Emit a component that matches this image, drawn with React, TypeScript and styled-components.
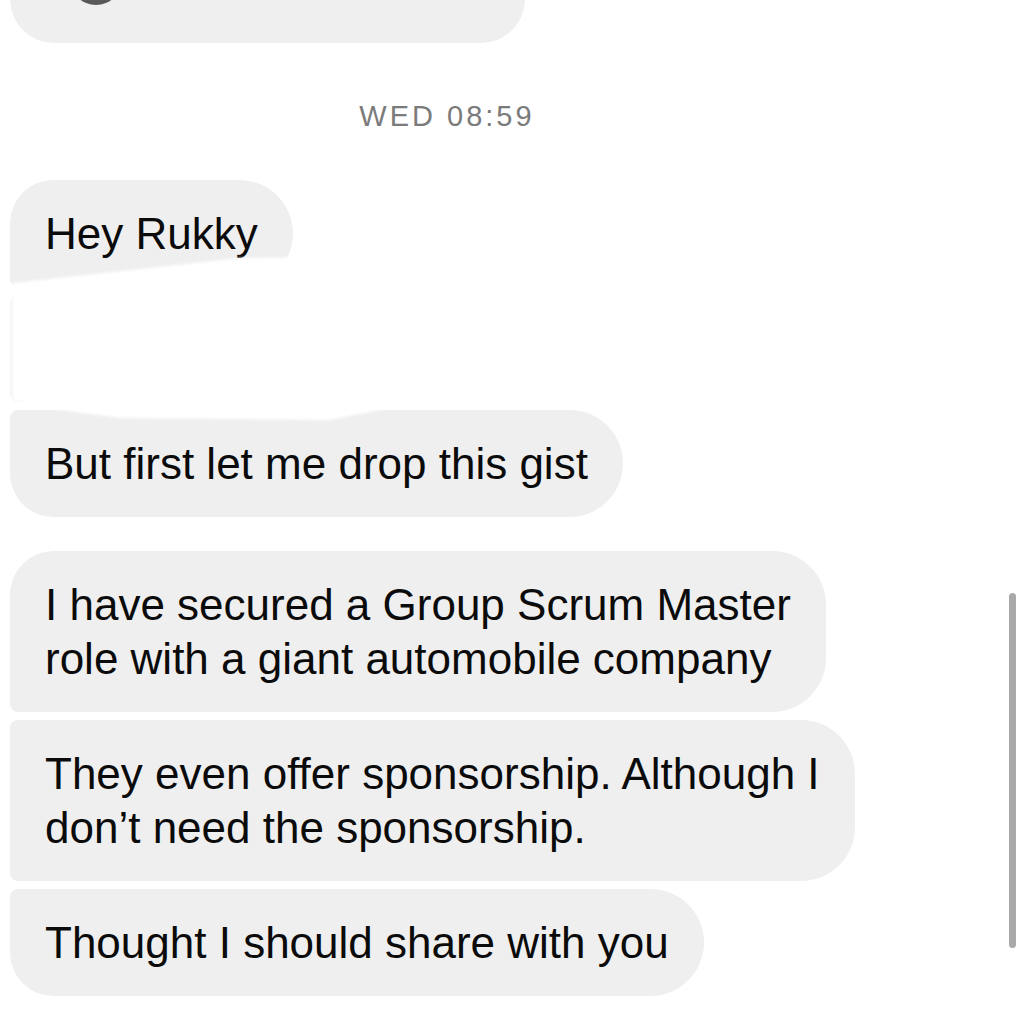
import React from "react";
import styled, { createGlobalStyle } from "styled-components";

const GlobalStyle = createGlobalStyle`
  html, body {
    margin: 0;
    padding: 0;
    background: #ffffff;
  }
  body {
    width: 1024px;
    height: 1018px;
    overflow: hidden;
    font-family: "Liberation Sans", Arial, sans-serif;
    -webkit-font-smoothing: antialiased;
  }
`;

type Pos = "first" | "middle" | "last" | "single";

const RADII: Record<Pos, string> = {
  first: "44px 54px 54px 8px",
  middle: "8px 54px 54px 8px",
  last: "8px 54px 54px 44px",
  single: "44px 54px 54px 44px",
};

const Screen = styled.main`
  position: relative;
  width: 1024px;
  height: 1018px;
  overflow: hidden;
  background: #ffffff;
`;

const Thread = styled.div`
  display: flex;
  flex-direction: column;
  align-items: flex-start;
  padding-left: 10px;
`;

/* Tail of an earlier media message, mostly scrolled off the top */
const MediaBubble = styled.div`
  box-sizing: border-box;
  width: 515px;
  height: 113px;
  margin-top: -70px;
  display: flex;
  align-items: flex-end;
  padding: 0 0 38px 60px;
  background: #efefef;
  border-radius: 0 0 44px 44px;
`;

const Avatar = styled.div`
  width: 52px;
  height: 52px;
  border-radius: 50%;
  background: #595959;
`;

const Stamp = styled.div`
  width: 874px;
  margin-top: 59px;
  text-align: center;
  font-size: 29px;
  line-height: 28px;
  letter-spacing: 3px;
  color: #7b7b7b;
`;

const Group = styled.section<{ $gapTop: number }>`
  position: relative;
  display: flex;
  flex-direction: column;
  align-items: flex-start;
  gap: 8px;
  margin-top: ${(p) => p.$gapTop}px;
`;

const Bubble = styled.div<{ $pos: Pos; $muted?: boolean }>`
  box-sizing: border-box;
  padding: 27px 35px 26px;
  background: ${(p) => (p.$muted ? "#f6f6f6" : "#efefef")};
  color: ${(p) => (p.$muted ? "#f6f6f6" : "#0b0b0b")};
  font-size: 44px;
  line-height: 54px;
  white-space: nowrap;
  border-radius: ${(p) => RADII[p.$pos]};
`;

/* White smudge painted over a hidden message */
const Smudge = styled.div`
  position: absolute;
  left: 3px;
  top: 74px;
  width: 630px;
  height: 170px;
  filter: blur(1.5px);
  pointer-events: none;
`;

const SmudgeShape = styled.div`
  width: 100%;
  height: 100%;
  background: #ffffff;
  clip-path: polygon(
    0 29px,
    227px 4px,
    630px 0,
    630px 154px,
    377px 154px,
    317px 166px,
    107px 164px,
    47px 156px,
    0 146px
  );
`;

const ScrollThumb = styled.div`
  position: absolute;
  right: 8px;
  top: 593px;
  width: 7px;
  height: 355px;
  border-radius: 4px;
  background: #a9a9a9;
`;

export default function App() {
  return (
    <Screen>
      <GlobalStyle />
      <Thread>
        <MediaBubble>
          <Avatar />
        </MediaBubble>

        <Stamp>WED 08:59</Stamp>

        <Group $gapTop={50}>
          <Bubble $pos="first">Hey Rukky</Bubble>
          <Bubble $pos="middle" $muted>
            &nbsp;
          </Bubble>
          <Bubble $pos="last">But first let me drop this gist</Bubble>
          <Smudge>
            <SmudgeShape />
          </Smudge>
        </Group>

        <Group $gapTop={34}>
          <Bubble $pos="first">
            I have secured a Group Scrum Master
            <br />
            role with a giant automobile company
          </Bubble>
          <Bubble $pos="middle">
            They even offer sponsorship. Although I
            <br />
            don’t need the sponsorship.
          </Bubble>
          <Bubble $pos="last">Thought I should share with you</Bubble>
        </Group>
      </Thread>
      <ScrollThumb />
    </Screen>
  );
}
